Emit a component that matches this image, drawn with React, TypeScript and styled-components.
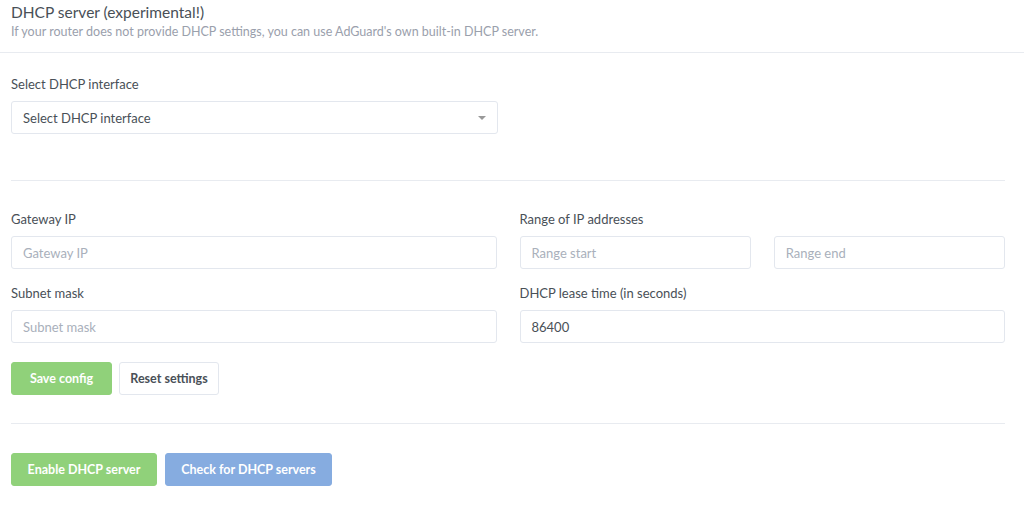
import React from "react";
import styled, { createGlobalStyle } from "styled-components";

const Global = createGlobalStyle`
  html, body { margin: 0; padding: 0; background: #fff; }
  body { font-family: Lato, "Liberation Sans", sans-serif; color: #495057; }
  * { box-sizing: border-box; }
`;

const Card = styled.div`
  width: 1024px;
  background: #fff;
`;

const Header = styled.div`
  height: 53px;
  padding: 2px 11px 0;
  border-bottom: 1px solid #e8ebf0;
`;

const Title = styled.div`
  font-size: 15.5px;
  line-height: 20px;
  color: #495057;
`;

const Subtitle = styled.div`
  font-size: 12.5px;
  line-height: 18px;
  margin-top: 1px;
  color: #9aa0ac;
`;

const Body = styled.div`
  padding: 21px 19px 0 11px;
`;

const Label = styled.div`
  font-size: 13px;
  line-height: 20px;
  color: #495057;
  margin-bottom: 7px;
`;

const FieldBox = styled.div<{ $width?: number }>`
  width: ${(p) => (p.$width ? `${p.$width}px` : "100%")};
  height: 33px;
  border: 1px solid #e3e7ee;
  border-radius: 3px;
  display: flex;
  align-items: center;
  padding: 0 11px;
  font-size: 13px;
  position: relative;
`;

const Placeholder = styled.span<{ $value?: boolean }>`
  color: ${(p) => (p.$value ? "#495057" : "#a9b0bb")};
`;

const Arrow = styled.span`
  position: absolute;
  right: 11px;
  top: 14px;
  width: 0;
  height: 0;
  border-left: 4px solid transparent;
  border-right: 4px solid transparent;
  border-top: 4px solid #999;
`;

const Rule = styled.div<{ $top: number; $bottom: number }>`
  height: 1px;
  background: #e8ebf0;
  margin: ${(p) => p.$top}px 0 ${(p) => p.$bottom}px;
`;

const Grid = styled.div`
  display: grid;
  grid-template-columns: 1fr 1fr;
  column-gap: 23px;
  row-gap: 14px;
`;

const Pair = styled.div`
  display: grid;
  grid-template-columns: 1fr 1fr;
  column-gap: 23px;
`;

const ButtonRow = styled.div<{ $gap: number; $top: number }>`
  display: flex;
  gap: ${(p) => p.$gap}px;
  margin-top: ${(p) => p.$top}px;
`;

const Button = styled.div<{ $kind: "green" | "blue" | "plain"; $w: number }>`
  width: ${(p) => p.$w}px;
  height: 33px;
  border-radius: 3px;
  display: flex;
  align-items: center;
  justify-content: center;
  font-size: 12.5px;
  font-weight: 700;
  background: ${(p) =>
    p.$kind === "green" ? "#90d17a" : p.$kind === "blue" ? "#86ace0" : "#fff"};
  color: ${(p) => (p.$kind === "plain" ? "#495057" : "#fff")};
  border: 1px solid
    ${(p) =>
      p.$kind === "green" ? "#90d17a" : p.$kind === "blue" ? "#86ace0" : "#e3e7ee"};
`;

export default function App() {
  return (
    <>
      <Global />
      <Card>
        <Header>
          <Title>DHCP server (experimental!)</Title>
          <Subtitle>
            If your router does not provide DHCP settings, you can use AdGuard's own built-in DHCP server.
          </Subtitle>
        </Header>
        <Body>
          <Label>Select DHCP interface</Label>
          <FieldBox $width={487}>
            <Placeholder $value>Select DHCP interface</Placeholder>
            <Arrow />
          </FieldBox>
          <Rule $top={46} $bottom={28} />
          <Grid>
            <div>
              <Label>Gateway IP</Label>
              <FieldBox>
                <Placeholder>Gateway IP</Placeholder>
              </FieldBox>
            </div>
            <div>
              <Label>Range of IP addresses</Label>
              <Pair>
                <FieldBox>
                  <Placeholder>Range start</Placeholder>
                </FieldBox>
                <FieldBox>
                  <Placeholder>Range end</Placeholder>
                </FieldBox>
              </Pair>
            </div>
            <div>
              <Label>Subnet mask</Label>
              <FieldBox>
                <Placeholder>Subnet mask</Placeholder>
              </FieldBox>
            </div>
            <div>
              <Label>DHCP lease time (in seconds)</Label>
              <FieldBox>
                <Placeholder $value>86400</Placeholder>
              </FieldBox>
            </div>
          </Grid>
          <ButtonRow $gap={7} $top={19}>
            <Button $kind="green" $w={101}>Save config</Button>
            <Button $kind="plain" $w={100}>Reset settings</Button>
          </ButtonRow>
          <Rule $top={28} $bottom={29} />
          <ButtonRow $gap={8} $top={0}>
            <Button $kind="green" $w={146}>Enable DHCP server</Button>
            <Button $kind="blue" $w={167}>Check for DHCP servers</Button>
          </ButtonRow>
        </Body>
      </Card>
    </>
  );
}
